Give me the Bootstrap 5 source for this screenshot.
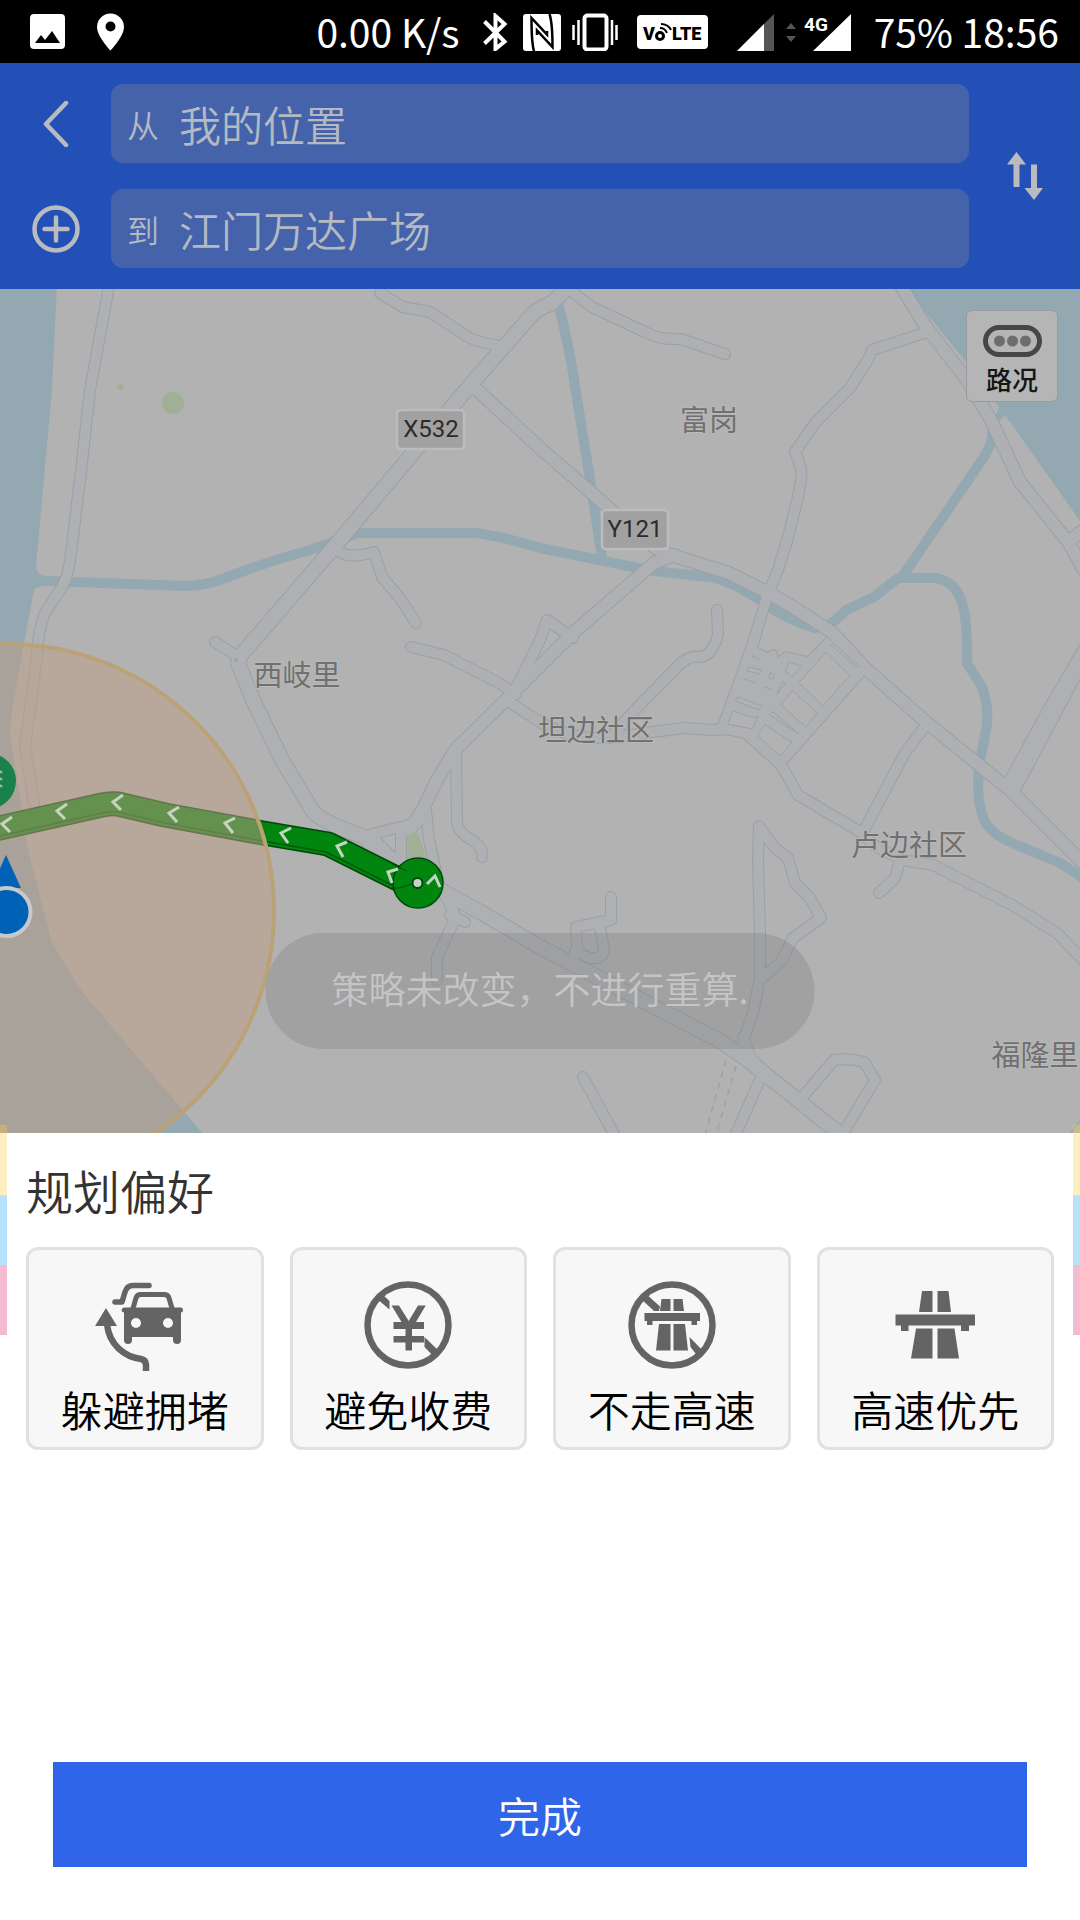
<!DOCTYPE html>
<html lang="zh-CN">
<head>
<meta charset="utf-8">
<meta name="viewport" content="width=device-width, initial-scale=1">
<title>规划偏好</title>
<link href="https://cdn.jsdelivr.net/npm/bootstrap@5.3.0/dist/css/bootstrap.min.css" rel="stylesheet">
<style>
  body { font-family: "Noto Sans CJK SC", "Noto Sans", sans-serif; font-weight: 350; background: #fff; }
  svg { display: block; flex: none; }
  .status-bar { height: 63px; padding: 0 21px 0 30px; background: #000; color: #fff; font-size: 39px; font-weight: 400; line-height: 58px; }
  .status-text { white-space: pre; margin-top: -2px; }
  .route-head { background: #2350b6; color: #b5b9c2; padding: 21px 0; }
  .route-rows { gap: 26px; }
  .side-btn { width: 111px; color: #b9bbbf; border: 0; border-radius: 0; padding: 0; }
  .place-field { height: 79px; border-radius: 12px; background: #4563ab; padding: 0 16px; gap: 20px; }
  .place-field label { font-size: 32px; line-height: 40px; }
  .place-field input { font-size: 42px; line-height: 60px; font-weight: inherit; color: #b5b9c2; background: none; border: 0; padding: 0; min-width: 0; outline: 0; }
  .map-area { background: #b2b2b2; height: 844px; }
  .map-area > svg { width: 100%; height: 100%; }
  .casing { stroke: #98a1a6; }
  .paving { stroke: #afb0b4; }
  .place-name { font: 29px "Noto Sans CJK SC", sans-serif; fill: #707070; stroke: #b9b9b9; stroke-width: 2px; paint-order: stroke; text-anchor: middle; }
  .road-no { font: 24px Roboto, sans-serif; fill: #2b2b2b; text-anchor: middle; }
  .traffic-btn { top: 21px; right: 22px; width: 92px; height: 92px; padding: 10px 0 0; gap: 2px; background: #b5b5b5; border: 1px solid #999c9c; border-radius: 6px; color: #161616; font-size: 26px; font-weight: 500; line-height: 32px; }
  .toast-pill { bottom: 84px; height: 116px; padding: 0 66px; background: rgba(110,110,110,.25); color: #c5c5c5; font-size: 37px; line-height: 110px; white-space: nowrap; }
  .sheet { flex: 1; padding: 22px 26px 53px; }
  .sheet h1 { font-size: 47px; line-height: 70px; color: #333; margin: 0 0 22px; font-weight: 350; }
  .options { display: grid; grid-template-columns: repeat(4, 1fr); gap: 26px; }
  .option-btn { height: 203px; padding: 31px 0 0; gap: 6px; background: #f7f7f7; border: 3px solid #e1e1e1; border-radius: 12px; color: #000; font-size: 42px; font-weight: 350; line-height: 60px; }
  .option-btn svg { color: #646464; }
  .done-btn { margin: 0 27px; height: 105px; background: #2f65e8; color: #fff; border: 0; border-radius: 0; font-size: 42px; font-weight: 350; line-height: 60px; }
  .edge { top: -8px; width: 7px; height: 210px; background: linear-gradient(rgba(252,206,62,.32) 0 33.33%, rgba(40,172,240,.34) 33.33% 66.66%, rgba(222,60,125,.35) 66.66%); }
</style>
<script src="https://cdn.jsdelivr.net/npm/bootstrap@5.3.0/dist/js/bootstrap.bundle.min.js"></script>
</head>
<body class="d-flex flex-column min-vh-100">

<div class="status-bar d-flex align-items-center">
  <svg width="35" height="35" viewBox="0 0 35 35"><rect width="35" height="35" rx="4" fill="#fff"/><path d="M5 29 11 21l4 5 7-9 8 12z"/></svg>
  <svg class="ms-4 me-auto" width="43" height="38" viewBox="-8 0 43 38"><path fill="#fff" fill-rule="evenodd" d="M13.500 .5a13.500 13.500 0 0 0-13.500 13.500c0 9.500 13.500 23.500 13.500 23.500s13.500-14 13.500-23.500a13.500 13.500 0 0 0-13.500-13.500zm0 8a5 5 0 1 1 0 10a5 5 0 0 1 0-10z"/></svg>
  <span class="status-text">0.00 K/s</span>
  <svg width="101" height="38" viewBox="460 12 101 38">
    <path d="M484.500 20.500l20 20-9 7.500V15l9 8-20 19.500" fill="none" stroke="#fff" stroke-width="4"/>
    <rect x="523" y="13" width="38" height="37" rx="3" fill="#fff"/>
    <path d="M534 50Q531.500 42 531.500 17L547 33.500V30M549.500 13Q552.500 22 552.500 46L537 29.500V34" fill="none" stroke="#000" stroke-width="2.500"/>
  </svg>
  <svg width="147" height="38" viewBox="561 12 147 38">
    <rect x="584.500" y="14.500" width="22" height="34" rx="3" fill="none" stroke="#fff" stroke-width="4"/>
    <path d="M578.500 19v25M573.500 24v15M612 19v25M616.500 24v15" stroke="#fff" stroke-width="2.500"/>
    <rect x="637" y="14" width="71" height="34" rx="4" fill="#fff"/>
    <g font-family="Roboto" font-weight="900" font-size="18"><text x="643" y="39">V</text><text x="672" y="39">LTE</text></g>
    <circle cx="660" cy="35" r="3.500" fill="none" stroke="#000" stroke-width="3"/>
    <path d="M660 27q5 0 7 5M661 23q7 0 10 6" fill="none" stroke="#000" stroke-width="2"/>
  </svg>
  <svg width="166" height="38" viewBox="708 12 166 38">
    <path d="M737 50l37-37v37z" fill="#555"/><path d="M737 50l27-27v27z" fill="#fff"/>
    <path d="M786 28l5-6 5 6zM786 35h10l-5 6z" fill="#555"/>
    <path d="M813 50l38-37v37z" fill="#fff"/>
    <text x="804" y="30" font-family="Roboto" font-weight="700" font-size="19" fill="#fff">4G</text>
  </svg>
  <span class="status-text">75% 18:56</span>
</div>

<header class="route-head d-flex">
  <div class="route-rows d-flex flex-column flex-grow-1">
    <div class="d-flex">
      <button class="side-btn btn d-flex align-items-center justify-content-center" aria-label="返回"><svg width="26" height="46" viewBox="0 0 26 46"><path d="M23 2 3 23l20 21" fill="none" stroke="currentColor" stroke-width="4.500" stroke-linecap="round" stroke-linejoin="round"/></svg></button>
      <div class="place-field d-flex align-items-center flex-grow-1"><label for="from">从</label><input id="from" class="flex-grow-1" type="text" value="我的位置"></div>
    </div>
    <div class="d-flex">
      <button class="side-btn btn d-flex align-items-center justify-content-center" aria-label="添加途经点"><svg width="48" height="48" viewBox="0 0 48 48"><g fill="none" stroke="currentColor" stroke-width="4.500" stroke-linecap="round"><circle cx="24" cy="24" r="21.500"/><path d="M12.500 24h23M24 12.500v23"/></g></svg></button>
      <div class="place-field d-flex align-items-center flex-grow-1"><label for="to">到</label><input id="to" class="flex-grow-1" type="text" value="江门万达广场"></div>
    </div>
  </div>
  <button class="side-btn btn d-flex align-items-center justify-content-center" aria-label="交换起终点"><svg width="36" height="48" viewBox="0 0 36 48"><path fill="currentColor" d="M9.500 0 19 12.500H12.500V35h-6V12.500H0zM27 48 17.500 36H24V12.500h6V36h6z"/></svg></button>
</header>

<main class="map-area position-relative overflow-hidden">
  <svg viewBox="0 289 1080 844" preserveAspectRatio="xMidYMid slice" role="img" aria-label="地图">
    <defs>
      <g id="wide-roads">
        <path d="M569 286L552 303Q535 310 530 317L472 383L334 547L241 655L238 663L253 700L282 760L312 810Q320 822 365 837L393 873M435 887L482 913L540 947L722 1042L745 1058L845 1138"/>
      </g>
      <g id="mid-roads">
        <path d="M475 388L540 448L609 508L655 548L671 555L729 573L769 593L798 610L833 633L865 668L926 722L1010 790L1085 865"/>
        <path d="M675 555L654 563L573 633L513 693L455 750L437 780L424 807L410 830"/>
        <path d="M901 286L926 327L967 380L991 420L1020 482L1069 543L1084 570M1069 541L1084 530"/>
      </g>
      <g id="lanes">
        <path d="M109 286L90 390L80 480L71 553Q69 575 62 587L45 613Q38 630 37 655L30 710L25 747L34 803"/>
        <path d="M380 293L403 307L430 312L468 337Q480 343 496 345"/>
        <path d="M567 288L592 307L647 333Q660 340 681 339L725 354"/>
        <path d="M924 333L872 350L869 358L850 388L815 423L795 452Q803 470 801 480L798 497L788 537L779 567L767 597L753 643L729 710L722 728"/>
        <path d="M717 610L718 635Q712 656 700 657Q690 655 680 664L635 710L615 732"/>
        <path d="M515 690L540 640L547 620L573 638"/>
        <path d="M411 647L444 655L499 683L516 694"/>
        <path d="M511 703L540 722Q570 740 610 738L652 732L685 728L712 730Q735 728 748 735L781 765L798 795L857 830L877 847L902 860L933 865L1012 905L1057 933L1085 962"/>
        <path d="M926 725L905 753L864 830"/>
        <path d="M1086 645L1048 710L1010 780M1080 668L1055 715L1015 790"/>
        <path d="M900 860L895 878L879 893"/>
        <path d="M743 1042L753 1013L760 977L760 933L758 860L759 826L774 847L788 858L795 883L810 898L821 918L793 938L781 962L762 978M743 1037L750 1057L762 1070"/>
        <path d="M611 897V920L576 927L577 947L571 962M600 927L604 950Q602 960 590 958L576 952"/>
        <path d="M583 1077L616 1138M762 1075L734 1138"/>
        <path d="M800 1100L834 1060Q850 1058 864 1062L875 1080L843 1133"/>
        <path d="M1086 1122L1074 1138"/>
        <path d="M456 752L457 823Q459 833 472 840Q484 848 482 857"/>
        <path d="M426 810L429 840L440 890M372 834L417 823L426 805M373 838L405 870M401 833V870"/>
        <path d="M446 897L456 917L437 957L437 980M450 915L465 922"/>
        <path d="M215 642L240 658"/>
        <path d="M337 550Q348 560 374 552L382 577L399 597L416 623"/>
      </g>
      <path id="town" d="M753 646L768 653Q776 645 778 658L785 652L808 657L827 637L867 672L787 763L770 750L745 734L722 728z"/>
    </defs>

    <g fill="#94a8b1">
      <path d="M0 285H57L52 390L36 567Q37 576 48 576V586Q36 586 34 590L24 643L12 710L10 733L28 850L52 943L83 993L202 1133V1140H0z"/>
      <path d="M905 285L922 308L967 363L999 407L994 420H1000L1005 415L1085 528V285z"/>
      <circle cx="173" cy="403" r="11" fill="#9fb097"/><circle cx="120.500" cy="387" r="3" fill="#9fb097"/>
    </g>
    <g fill="none" stroke="#94a8b1" stroke-width="10" stroke-linejoin="round">
      <path d="M45 581L186 586Q205 586 225 578Q260 564 310 550L358 533H475Q500 536 540 548L609 562L647 570L716 578Q735 584 760 600Q785 620 815 628Q830 628 846 610L874 597L898 578H936Q955 582 961 600Q968 620 967 663L982 687Q990 710 986 730L979 767Q976 800 984 820Q990 833 1010 842L1060 863L1086 880"/>
      <path d="M900 580L984 457L991 443L994 415"/><path d="M558 303Q570 350 574 380L588 467L602 558"/>
    </g>

    <g fill="none" stroke-linecap="round" stroke-linejoin="round">
      <g class="casing"><use href="#town" stroke-width="2"/><use href="#wide-roads" stroke-width="16"/><use href="#mid-roads" stroke-width="14"/><use href="#lanes" stroke-width="12"/></g>
      <g class="paving"><use href="#town" fill="#afb0b4" stroke="none"/><use href="#wide-roads" stroke-width="14"/><use href="#mid-roads" stroke-width="12"/><use href="#lanes" stroke-width="10"/></g>
      <path class="casing" d="M726 1060L705 1135M736 1066L716 1135" stroke-dasharray="6 6" stroke-linecap="butt" stroke-width="1.500"/>
      <path class="casing" fill="#b2b2b2" d="M826 653L850 675L823 706L799 683zM793 691L817 713L806 727L781 705zM765 725L792 742L780 756L758 736zM733 711L755 718L758 716L752 729L728 724zM738 697L762 706L759 710L736 701zM789 662L801 666L792 677L786 672zM749 667L761 670L759 674L748 671zM771 673L774 675L773 679L769 678zM783 682L785 684L777 694zM773 712L799 734L770 715zM833 643L859 666L857 667L831 645zM752 656L759 659M744 679L756 683M764 687L770 689"/>
    </g>
    <circle cx="236" cy="660" r="2" fill="#98a1a6"/>
    <path d="M407 862V838Q413 828 420 838L427 862z" fill="#a1b198"/>

    <g stroke-width="2.500">
      <rect x="397" y="410" width="67" height="39" rx="4" fill="#a1a1a1" stroke="#bcbcbc"/>
      <rect x="602" y="510" width="66" height="39" rx="4" fill="#a1a1a1" stroke="#bcbcbc"/>
    </g>
    <text class="road-no" x="431" y="437">X532</text>
    <text class="road-no" x="635" y="537">Y121</text>
    <text class="place-name" x="709" y="431">富岗</text>
    <text class="place-name" x="297" y="686">西岐里</text>
    <text class="place-name" x="596" y="741">坦边社区</text>
    <text class="place-name" x="909" y="856">卢边社区</text>
    <text class="place-name" x="1035" y="1066">福隆里</text>

    <g fill="none" stroke-linejoin="round">
      <path d="M-5 829L102 805Q110 803 118 804L165 815L263 833L328 844L400 880" stroke="#00480a" stroke-width="25"/>
      <path d="M-5 829L102 805Q110 803 118 804L165 815L263 833L328 844L400 880" stroke="#00860f" stroke-width="22"/>
      <path d="M-5 837L102 813Q110 811 118 812L165 823L263 841L326 852L394 886" stroke="#00580c" stroke-width="1.500"/>
    </g>
    <circle cx="418" cy="883" r="25" fill="#00860f" stroke="#00480a" stroke-width="1.500"/>
    <path d="M392 888l8 0 14-5M392 864l15 7" fill="none" stroke="#00480a"/>
    <circle cx="417.500" cy="883" r="5" fill="#c4d4c4" stroke="#00480a" stroke-width="2"/>
    <circle cx="7" cy="911" r="267" fill="#bd9c86" fill-opacity=".53" stroke="#bba276" stroke-width="4"/>
    <g fill="none" stroke="#c6d2c2" stroke-width="3">
      <path d="M12 817l-10 7 8 8"/><path d="M67 804l-10 7 8 8"/><path d="M123 795l-10 7 8 8"/><path d="M179 807l-10 6 8 9"/><path d="M235 818l-10 5 8 10"/><path d="M291 828l-10 5 7 10"/><path d="M347 842l-10 4 6 11"/><path d="M398 869l-10 3 4 11"/><path d="M427 884l8-8 5 11"/>
    </g>
    <circle cx="-12" cy="781" r="28" fill="#1b814b"/>
    <path d="M0 771l2 2M0 778l2 2M0 785l2 2" stroke="#9cc3ac" stroke-width="2"/>
    <path d="M6 855L21 888H-9z" fill="#0062b6"/>
    <circle cx="6.500" cy="912" r="24" fill="#0062b6" stroke="#c6c8cc" stroke-width="4"/>
  </svg>
  <button class="traffic-btn btn position-absolute d-flex flex-column align-items-center">
    <svg width="59" height="40" viewBox="0 0 59 40"><rect x="2.500" y="6.500" width="54" height="27" rx="13.500" fill="none" stroke="#464646" stroke-width="5"/><g fill="#6d6d6d"><circle cx="16.500" cy="20" r="5.500"/><circle cx="29.500" cy="20" r="5.500"/><circle cx="42.500" cy="20" r="5.500"/></g></svg>
    <span>路况</span>
  </button>
  <div class="toast-pill position-absolute start-50 translate-middle-x rounded-pill" role="status">策略未改变，不进行重算.</div>
</main>

<section class="sheet position-relative d-flex flex-column">
  <div class="edge position-absolute start-0"></div>
  <div class="edge position-absolute end-0"></div>
  <h1>规划偏好</h1>
  <div class="options">
    <button class="option-btn btn d-flex flex-column align-items-center">
      <svg width="104" height="92" viewBox="0 0 104 92"><g fill="none" stroke="currentColor"><path d="M56 4.500H40Q34 4.500 32 11L29 21H22" stroke-width="5.500" stroke-linecap="round" stroke-linejoin="round"/><path d="M39.500 29L43 17Q44 13.500 48 13.500H71Q75 13.500 76 17L79.500 29" stroke-width="5"/><path d="M14 43C16 64 32 76 48 78Q53 79 53 84V90" stroke-width="6.500"/></g><path fill="currentColor" fill-rule="evenodd" d="M31 26.500H88Q90 26.500 90 29T88 31.500V59a4 4 0 0 1-8 0V56H39V59a4 4 0 0 1-8 0V31.500Q28.500 31 28.500 29T31 26.500zM43 37a5 5 0 1 0 0 10a5 5 0 0 0 0-10zM75 37a5 5 0 1 0 0 10a5 5 0 0 0 0-10zM13 27L24 45H2z"/></svg>
      <span>躲避拥堵</span>
    </button>
    <button class="option-btn btn d-flex flex-column align-items-center">
      <svg width="104" height="92" viewBox="0 0 104 92"><circle cx="52" cy="44" r="40.500" fill="none" stroke="currentColor" stroke-width="6.500"/><path fill="currentColor" d="M20 17L25 12L33.500 20V28.500zM68.500 56L84 71L79 77L68.500 66zM35.500 24.500H43L52.700 40L62 24.500H69.700L60 41H68V48H56V55H68V61.500H56V69.500H49.500V61.500H37.500V55H49.500V48H37.500V41H45.500z"/></svg>
      <span>避免收费</span>
    </button>
    <button class="option-btn btn d-flex flex-column align-items-center">
      <svg width="104" height="92" viewBox="0 0 104 92"><circle cx="52" cy="44" r="40.500" fill="none" stroke="currentColor" stroke-width="6.500"/><path fill="currentColor" d="M20 17L25 12L40 25.500L39 30H34zM69.500 56L84 71L79 77L70.500 66zM41.500 18H50.500V30H40zM53.500 18H62.500L64 30H53.500zM24.500 32H80V40H77V44H71.500V40H32.500V44H27V40H24.500zM39 43H50.500V69.500H36zM53.500 43H65L68 69.500H53.500z"/></svg>
      <span>不走高速</span>
    </button>
    <button class="option-btn btn d-flex flex-column align-items-center">
      <svg width="104" height="92" viewBox="0 0 104 92"><path fill="currentColor" d="M39 10H49.500V31H36zM54.500 10H65.500L68 31H54.500zM12.500 33.500H92V44.500H86V50H78V44.500H25.500V50H18V44.500H12.500zM33 47.500H49.500V77.500H28zM54.500 47.500H71.500L76 77.500H54.500z"/></svg>
      <span>高速优先</span>
    </button>
  </div>
  <button class="done-btn btn mt-auto">完成</button>
</section>
</body>
</html>
